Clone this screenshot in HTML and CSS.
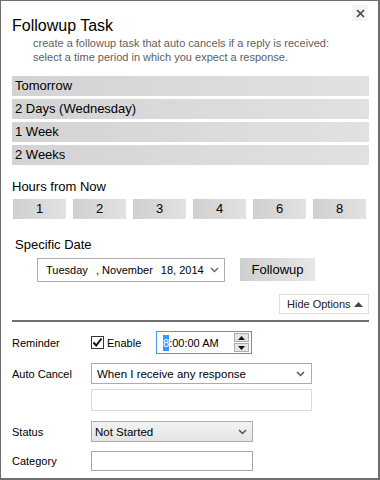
FILE: index.html
```html
<!DOCTYPE html>
<html lang="en">

<head>
    <meta charset="UTF-8">
    <title>Followup Task</title>
    <link rel="stylesheet" href="styles.css">
</head>

<body>
    <div class="window">
        <div class="top">
            <h2 class="title">Followup Task</h2>
            <div class="close">
                <svg width="9" height="9" viewBox="0 0 9 9"><path d="M1 1L8 8M8 1L1 8" stroke="#444" stroke-width="1.6"/></svg>
            </div>
        </div>
        <p class="subtitle">create a followup task that auto cancels if a reply is received:<br>select a time period in which you expect a response.</p>

        <div class="options">
            <div class="option">Tomorrow</div>
            <div class="option">2 Days (Wednesday)</div>
            <div class="option">1 Week</div>
            <div class="option">2 Weeks</div>
        </div>

        <div class="section-label">Hours from Now</div>
        <div class="hours">
            <div class="hour">1</div>
            <div class="hour">2</div>
            <div class="hour">3</div>
            <div class="hour">4</div>
            <div class="hour">6</div>
            <div class="hour">8</div>
        </div>

        <div class="section-label date-label">Specific Date</div>
        <div class="date-row">
            <div class="date-picker">
                <span class="dp-day">Tuesday</span><span>, November</span><span class="dp-year">18, 2014</span>
                <svg class="chev" width="9" height="6" viewBox="0 0 9 6"><path d="M1 1L4.5 4.5L8 1" fill="none" stroke="#666" stroke-width="1.4"/></svg>
            </div>
            <div class="followup">Followup</div>
        </div>

        <div class="hide-options">
            Hide Options
            <svg width="9" height="5" viewBox="0 0 9 5"><path d="M0 5L4.5 0L9 5Z" fill="#444"/></svg>
        </div>
        <div class="separator"></div>

        <div class="form">
            <div class="field">
                <div class="label">Reminder</div>
                <div class="check-wrap">
                    <span class="checkbox">
                        <svg width="11" height="11" viewBox="0 0 11 11"><path d="M1.5 5.5L4.2 8.5L9.5 1.5" fill="none" stroke="#111" stroke-width="2"/></svg>
                    </span>
                    <span>Enable</span>
                </div>
                <div class="time-box">
                    <span class="time-text"><span class="sel">8</span>:00:00 AM</span>
                    <div class="spinner">
                        <div class="spin">
                            <svg width="7" height="4" viewBox="0 0 7 4"><path d="M0 4L3.5 0L7 4Z" fill="#111"/></svg>
                        </div>
                        <div class="spin">
                            <svg width="7" height="4" viewBox="0 0 7 4"><path d="M0 0L3.5 4L7 0Z" fill="#111"/></svg>
                        </div>
                    </div>
                </div>
            </div>
            <div class="field f-cancel">
                <div class="label">Auto Cancel</div>
                <div class="select wide">
                    <span>When I receive any response</span>
                    <svg width="9" height="6" viewBox="0 0 9 6"><path d="M1 1L4.5 4.5L8 1" fill="none" stroke="#555" stroke-width="1.5"/></svg>
                </div>
            </div>
            <div class="field f-text">
                <div class="label"></div>
                <div class="textbox"></div>
            </div>
            <div class="field f-status">
                <div class="label">Status</div>
                <div class="select narrow dropdown">
                    <span>Not Started</span>
                    <svg width="9" height="6" viewBox="0 0 9 6"><path d="M1 1L4.5 4.5L8 1" fill="none" stroke="#555" stroke-width="1.5"/></svg>
                </div>
            </div>
            <div class="field f-category">
                <div class="label">Category</div>
                <div class="input"></div>
            </div>
        </div>
    </div>
</body>

</html>
```

FILE: styles.css
```css
body {
    margin: 0;
    font-family: "Liberation Sans", Arial, sans-serif;
    background-color: #ffffff;
    color: #000000;
}

.window {
    width: 380px;
    height: 480px;
    box-sizing: border-box;
    border: 1px solid #6f6f6f;
    border-right-width: 2px;
    border-bottom-width: 2px;
    padding: 4px 9px 0 11px;
    display: flex;
    flex-direction: column;
}

.top {
    display: flex;
    justify-content: space-between;
    align-items: flex-start;
}

.title {
    margin: 11px 0 0 0;
    font-size: 16px;
    line-height: 20px;
    font-weight: normal;
}

.close {
    width: 16px;
    height: 16px;
    margin-right: 1px;
    background-color: #f5f5f5;
    display: flex;
    align-items: center;
    justify-content: center;
}

.subtitle {
    margin: 0;
    padding-left: 21px;
    font-size: 11px;
    line-height: 14px;
    color: #606060;
}

.options {
    margin-top: 12px;
    display: flex;
    flex-direction: column;
    gap: 3px;
}

.option {
    height: 20px;
    line-height: 20px;
    padding-left: 3px;
    font-size: 13px;
    background: linear-gradient(to right, #d3d3d3, #e1e1e1);
}

.section-label {
    margin-top: 14px;
    font-size: 13px;
    line-height: 16px;
}

.hours {
    margin-top: 4px;
    padding-left: 1px;
    display: flex;
    gap: 7px;
}

.hour {
    width: 53px;
    height: 20px;
    line-height: 20px;
    text-align: center;
    font-size: 13px;
    background: linear-gradient(to right, #cfcfcf, #e2e2e2);
}

.date-label {
    margin-top: 18px;
    padding-left: 3px;
}

.date-row {
    margin-top: 5px;
    padding-left: 25px;
    display: flex;
    align-items: flex-start;
}

.date-picker {
    width: 188px;
    height: 24px;
    box-sizing: border-box;
    border: 1px solid #acacac;
    padding-left: 8px;
    display: flex;
    align-items: center;
    font-size: 11px;
}

.dp-day {
    width: 50px;
}

.dp-year {
    margin-left: 8px;
}

.date-picker .chev {
    margin-left: auto;
    margin-right: 5px;
}

.followup {
    margin-left: 15px;
    width: 75px;
    height: 23px;
    line-height: 23px;
    text-align: center;
    font-size: 13px;
    background: linear-gradient(to right, #cfcfcf, #e7e7e7);
}

.hide-options {
    margin-top: 12px;
    align-self: flex-end;
    width: 90px;
    height: 20px;
    box-sizing: border-box;
    border: 1px solid #dcdcdc;
    padding: 0 5px 0 7px;
    display: flex;
    align-items: center;
    justify-content: space-between;
    font-size: 11px;
    color: #222;
}

.separator {
    margin-top: 6px;
    height: 2px;
    background-color: #6f6f6f;
}

.form {
    margin-top: 9px;
    display: flex;
    flex-direction: column;
}

.field {
    display: flex;
    align-items: center;
    font-size: 11px;
}

.label {
    width: 79px;
    flex-shrink: 0;
}

.check-wrap {
    width: 65px;
    display: flex;
    align-items: center;
    gap: 3px;
    font-size: 11px;
}

.checkbox {
    width: 13px;
    height: 13px;
    box-sizing: border-box;
    border: 1px solid #333;
    display: flex;
    align-items: center;
    justify-content: center;
    background-color: #fff;
}

.time-box {
    width: 96px;
    height: 23px;
    box-sizing: border-box;
    border: 1px solid #4a96e6;
    padding-left: 6px;
    display: flex;
    align-items: center;
}

.sel {
    background-color: #3399ff;
    color: #ffffff;
    padding: 2px 0;
}

.spinner {
    margin-left: auto;
    margin-right: 2px;
    width: 15px;
    display: flex;
    flex-direction: column;
}

.spin {
    height: 9px;
    box-sizing: border-box;
    border: 1px solid #adadad;
    background-color: #e6e6e6;
    display: flex;
    align-items: center;
    justify-content: center;
}

.spin + .spin {
    margin-top: 1px;
}

.f-cancel {
    margin-top: 9px;
}

.select {
    height: 21px;
    box-sizing: border-box;
    border: 1px solid #acacac;
    display: flex;
    align-items: center;
    justify-content: space-between;
    font-size: 11.5px;
}

.wide {
    width: 221px;
    padding: 0 6px 0 5px;
}

.narrow {
    width: 162px;
    padding: 0 5px 0 3px;
}

.dropdown {
    background: linear-gradient(#f2f2f2, #e5e5e5);
}

.f-text {
    margin-top: 5px;
}

.textbox {
    width: 221px;
    height: 22px;
    box-sizing: border-box;
    border: 1px solid #dadada;
}

.f-status {
    margin-top: 10px;
}

.f-category {
    margin-top: 9px;
}

.input {
    width: 162px;
    height: 20px;
    box-sizing: border-box;
    border: 1px solid #a5a5a5;
}
```
